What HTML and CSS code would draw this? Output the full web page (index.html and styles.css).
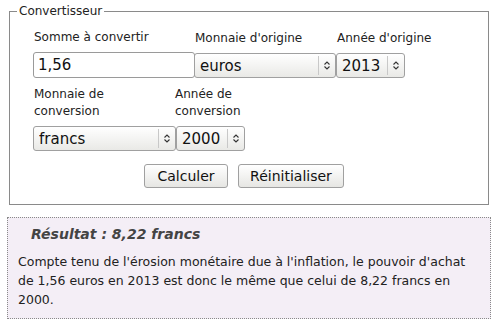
FILE: index.html
```html
<!DOCTYPE html>
<html lang="fr">
<head>
<meta charset="utf-8">
<title>Convertisseur</title>
<link rel="stylesheet" href="styles.css">
</head>
<body>
<div class="page">
  <form class="converter">
    <fieldset class="box">
      <legend class="legend">Convertisseur</legend>
      <div class="box-body">
        <div class="row row-1">
          <label class="field f-amount">
            <span class="lbl">Somme à convertir</span>
            <input class="text-input" type="text" value="1,56">
          </label>
          <label class="field f-cur">
            <span class="lbl">Monnaie d'origine</span>
            <span class="sel sel-wide">
              <select><option>euros</option></select>
              <span class="arrow"><svg width="8" height="11" viewBox="0 0 8 11"><path d="M1.5 4.5 L4 2 L6.5 4.5 M1.5 6.5 L4 9 L6.5 6.5" fill="none" stroke="#333" stroke-width="1.1"/></svg></span>
            </span>
          </label>
          <label class="field f-year">
            <span class="lbl">Année d'origine</span>
            <span class="sel sel-year">
              <select><option>2013</option></select>
              <span class="arrow"><svg width="8" height="11" viewBox="0 0 8 11"><path d="M1.5 4.5 L4 2 L6.5 4.5 M1.5 6.5 L4 9 L6.5 6.5" fill="none" stroke="#333" stroke-width="1.1"/></svg></span>
            </span>
          </label>
        </div>
        <div class="row row-2">
          <label class="field f-cur2">
            <span class="lbl">Monnaie de<br>conversion</span>
            <span class="sel sel-wide2">
              <select><option>francs</option></select>
              <span class="arrow"><svg width="8" height="11" viewBox="0 0 8 11"><path d="M1.5 4.5 L4 2 L6.5 4.5 M1.5 6.5 L4 9 L6.5 6.5" fill="none" stroke="#333" stroke-width="1.1"/></svg></span>
            </span>
          </label>
          <label class="field f-year2">
            <span class="lbl lbl-tight">Année de<br>conversion</span>
            <span class="sel sel-year">
              <select><option>2000</option></select>
              <span class="arrow"><svg width="8" height="11" viewBox="0 0 8 11"><path d="M1.5 4.5 L4 2 L6.5 4.5 M1.5 6.5 L4 9 L6.5 6.5" fill="none" stroke="#333" stroke-width="1.1"/></svg></span>
            </span>
          </label>
        </div>
        <div class="actions">
          <button type="button" class="btn btn-calc">Calculer</button>
          <button type="button" class="btn btn-reset">Réinitialiser</button>
        </div>
      </div>
    </fieldset>
  </form>
  <div class="result">
    <h2 class="result-title">Résultat : 8,22 francs</h2>
    <p class="result-text">Compte tenu de l'érosion monétaire due à l'inflation, le pouvoir d'achat de 1,56 euros en 2013 est donc le même que celui de 8,22 francs en 2000.</p>
  </div>
</div>
</body>
</html>
```
FILE: styles.css
```css
html, body {
  margin: 0;
  padding: 0;
  background: #ffffff;
}
body {
  font-family: "DejaVu Sans", sans-serif;
  font-size: 12px;
  color: #222;
}
.page {
  width: 484px;
  margin-left: 7px;
  padding-top: 4px;
}
.converter {
  margin: 0;
}
.box {
  margin: 0 2px;
  border: 1px solid #8a8a8a;
  padding: 0;
  min-width: 0;
}
.legend {
  padding: 0 2px;
  margin-left: 7px;
  font-size: 12px;
  line-height: 14px;
  color: #222;
}
.box-body {
  padding: 11px 33px 16px 23px;
}
.row {
  display: flex;
  align-items: flex-end;
}
.row-2 {
  margin-top: 8px;
}
.field {
  display: flex;
  flex-direction: column;
}
.lbl {
  line-height: 17px;
  margin-bottom: 6px;
  padding-left: 1px;
}
.lbl-tight {
  padding-left: 0;
  margin-left: -1px;
}
.f-amount { width: 161px; }
.f-cur { width: 142px; }
.f-cur2 { width: 143px; }
.text-input {
  box-sizing: border-box;
  width: 162px;
  height: 26px;
  border: 1px solid #9a9a9a;
  border-radius: 3px;
  padding: 0 4px;
  font-family: "DejaVu Sans", sans-serif;
  font-size: 15px;
  color: #111;
  background: #fff;
  margin: 0;
}
.sel {
  position: relative;
  display: inline-block;
  height: 25px;
  margin-bottom: 0;
}
.sel select {
  appearance: none;
  -webkit-appearance: none;
  box-sizing: border-box;
  width: 100%;
  height: 25px;
  margin: 0;
  border: 1px solid #a0a0a0;
  border-radius: 3px;
  background: linear-gradient(#ffffff, #e9e9e6);
  font-family: "DejaVu Sans", sans-serif;
  font-size: 15px;
  color: #111;
  padding: 0 0 0 5px;
}
.sel-wide { width: 142px; }
.sel-wide2 { width: 143px; }
.sel-year { width: 69px; }
.arrow {
  position: absolute;
  right: 1px;
  top: 3px;
  bottom: 3px;
  width: 16px;
  border-left: 1px solid #c8c8c8;
  display: flex;
  align-items: center;
  justify-content: center;
  pointer-events: none;
}
.actions {
  display: flex;
  justify-content: center;
  gap: 10px;
  margin-top: 13px;
}
.btn {
  box-sizing: border-box;
  height: 24px;
  border: 1px solid #a0a0a0;
  border-radius: 3px;
  background: linear-gradient(#ffffff, #e6e6e3);
  font-family: "DejaVu Sans", sans-serif;
  font-size: 14px;
  color: #111;
  padding: 0 6px;
  margin: 0;
}
.btn-calc { width: 84px; }
.btn-reset { width: 106px; }
.result {
  margin-top: 12px;
  border: 1px dotted #8a8a8a;
  background: #f4eef6;
  padding: 7px 10px 9px 10px;
}
.result-title {
  margin: 0 0 9px 13px;
  font-size: 14px;
  font-style: italic;
  font-weight: bold;
  color: #444;
  line-height: 18px;
}
.result-text {
  margin: 0;
  line-height: 19px;
  font-size: 12.5px;
  color: #222;
}
```
